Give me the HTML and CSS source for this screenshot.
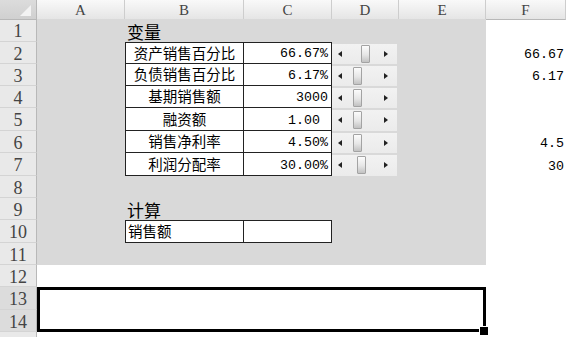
FILE: index.html
```html
<!DOCTYPE html>
<html lang="zh">
<head>
  <meta charset="UTF-8" />
  <title>变量</title>
  <link rel="stylesheet" href="styles.css">
</head>
<body>
  <div class="sheet">
    <!-- 列标题 -->
    <div class="row head">
      <div class="corner"><span class="tri"></span></div>
      <div class="ch">A</div>
      <div class="ch">B</div>
      <div class="ch">C</div>
      <div class="ch">D</div>
      <div class="ch">E</div>
      <div class="ch">F</div>
    </div>

    <div class="row tall">
      <div class="rh">1</div>
      <div class="c g"></div>
      <div class="c g title">变量</div>
      <div class="c g"></div>
      <div class="c g"></div>
      <div class="c g"></div>
      <div class="c"></div>
    </div>

    <div class="row">
      <div class="rh">2</div>
      <div class="c g"></div>
      <div class="c tb top">资产销售百分比</div>
      <div class="c tc top">66.67%</div>
      <div class="c g"><div class="spin"><i class="al"></i><i class="thumb" style="margin-left:19px"></i><i class="ar"></i></div></div>
      <div class="c g"></div>
      <div class="c num">66.67</div>
    </div>

    <div class="row">
      <div class="rh">3</div>
      <div class="c g"></div>
      <div class="c tb">负债销售百分比</div>
      <div class="c tc">6.17%</div>
      <div class="c g"><div class="spin"><i class="al"></i><i class="thumb" style="margin-left:11px"></i><i class="ar"></i></div></div>
      <div class="c g"></div>
      <div class="c num">6.17</div>
    </div>

    <div class="row">
      <div class="rh">4</div>
      <div class="c g"></div>
      <div class="c tb">基期销售额</div>
      <div class="c tc">3000</div>
      <div class="c g"><div class="spin"><i class="al"></i><i class="thumb" style="margin-left:11px"></i><i class="ar"></i></div></div>
      <div class="c g"></div>
      <div class="c"></div>
    </div>

    <div class="row tall">
      <div class="rh">5</div>
      <div class="c g"></div>
      <div class="c tb">融资额</div>
      <div class="c tc">1.00&nbsp;</div>
      <div class="c g"><div class="spin"><i class="al"></i><i class="thumb" style="margin-left:11px"></i><i class="ar"></i></div></div>
      <div class="c g"></div>
      <div class="c"></div>
    </div>

    <div class="row">
      <div class="rh">6</div>
      <div class="c g"></div>
      <div class="c tb">销售净利率</div>
      <div class="c tc">4.50%</div>
      <div class="c g"><div class="spin"><i class="al"></i><i class="thumb" style="margin-left:11px"></i><i class="ar"></i></div></div>
      <div class="c g"></div>
      <div class="c num">4.5</div>
    </div>

    <div class="row tall">
      <div class="rh">7</div>
      <div class="c g"></div>
      <div class="c tb">利润分配率</div>
      <div class="c tc">30.00%</div>
      <div class="c g"><div class="spin"><i class="al"></i><i class="thumb" style="margin-left:15px"></i><i class="ar"></i></div></div>
      <div class="c g"></div>
      <div class="c num">30</div>
    </div>

    <div class="row">
      <div class="rh">8</div>
      <div class="c g"></div>
      <div class="c g"></div>
      <div class="c g"></div>
      <div class="c g"></div>
      <div class="c g"></div>
      <div class="c"></div>
    </div>

    <div class="row">
      <div class="rh">9</div>
      <div class="c g"></div>
      <div class="c g title">计算</div>
      <div class="c g"></div>
      <div class="c g"></div>
      <div class="c g"></div>
      <div class="c"></div>
    </div>

    <div class="row tall">
      <div class="rh">10</div>
      <div class="c g"></div>
      <div class="c tb top left">销售额</div>
      <div class="c tc top"></div>
      <div class="c g"></div>
      <div class="c g"></div>
      <div class="c"></div>
    </div>

    <div class="row">
      <div class="rh">11</div>
      <div class="c g"></div>
      <div class="c g"></div>
      <div class="c g"></div>
      <div class="c g"></div>
      <div class="c g"></div>
      <div class="c"></div>
    </div>

    <div class="row">
      <div class="rh">12</div>
      <div class="c"></div>
      <div class="c"></div>
      <div class="c"></div>
      <div class="c"></div>
      <div class="c"></div>
      <div class="c"></div>
    </div>

    <!-- 合并单元格 A13:E14（选中） -->
    <div class="row pair">
      <div class="rh sel">13</div>
      <div class="merge"></div>
      <div class="rh sel">14</div>
      <div class="c"></div>
      <div class="c"></div>
    </div>

    <div class="row">
      <div class="rh"></div>
      <div class="c"></div>
    </div>
  </div>
</body>
</html>
```

FILE: styles.css
```css
* { margin: 0; padding: 0; box-sizing: border-box; }

body {
  background: #fff;
  overflow: hidden;
  font-family: "Noto Sans CJK SC", sans-serif;
  color: #000;
}

.sheet {
  width: 566px;
  height: 337px;
  overflow: hidden;
}

.row {
  display: grid;
  grid-template-columns: 37px 88px 119px 88px 67px 87px 80px;
  height: 22px;
}
.row.tall { height: 23px; }
.row.head { height: 19px; }

/* 左上角 */
.corner {
  position: relative;
  background: linear-gradient(#dcdcdc, #d0d0d0);
  border-right: 1px solid #b8b8b8;
  border-bottom: 1px solid #b8b8b8;
}
.tri {
  position: absolute;
  right: 5px;
  bottom: 3px;
  width: 0;
  height: 0;
  border-left: 11px solid transparent;
  border-bottom: 11px solid #f3f3f3;
}

.ch {
  display: flex;
  align-items: center;
  justify-content: center;
  padding-top: 2px;
  background: linear-gradient(#f9f9f9, #e5e5e5);
  border-right: 1px solid #cdcdcd;
  border-bottom: 1px solid #b8b8b8;
  font: 15px "Liberation Serif", serif;
  color: #444;
}

.rh {
  display: flex;
  align-items: center;
  justify-content: center;
  padding-top: 2px;
  background: #e9e9e9;
  border-right: 1px solid #b8b8b8;
  border-bottom: 1px solid #d4d4d4;
  font: 18px "Liberation Serif", serif;
  line-height: 1;
  color: #444;
}
.rh.sel { background: #dcdcdc; }

.c {
  display: flex;
  align-items: center;
  line-height: 1;
  white-space: nowrap;
}
.g { background: #d9d9d9; }

.title {
  align-items: flex-end;
  padding: 0 0 2px 2px;
  font-size: 17px;
}

/* 变量表格 */
.tb {
  justify-content: center;
  background: #fff;
  border-left: 1px solid #222;
  border-right: 1px solid #222;
  border-bottom: 1px solid #222;
  font-size: 14.5px;
}
.tb.left {
  justify-content: flex-start;
  padding-left: 2px;
}
.tc {
  justify-content: flex-end;
  align-items: flex-end;
  padding: 0 3px 2px 0;
  background: #fff;
  border-right: 1px solid #222;
  border-bottom: 1px solid #222;
  font: 13.3px "Liberation Mono", monospace;
}
.top { border-top: 1px solid #222; }

.num {
  justify-content: flex-end;
  align-items: flex-end;
  padding: 0 2px 2px 0;
  font: 13.3px "Liberation Mono", monospace;
}

/* 滚动条控件 */
.spin {
  display: flex;
  align-items: center;
  width: 65px;
  height: calc(100% - 2px);
  margin-top: 1px;
  background: linear-gradient(#f2f2f2, #ebebeb);
}
.al {
  margin-left: 6px;
  border-top: 3px solid transparent;
  border-bottom: 3px solid transparent;
  border-right: 4px solid #222;
}
.ar {
  margin-left: auto;
  margin-right: 9px;
  border-top: 3px solid transparent;
  border-bottom: 3px solid transparent;
  border-left: 4px solid #222;
}
.thumb {
  width: 9px;
  height: 18px;
  border: 1px solid #a3a3a3;
  border-radius: 1px;
  background: linear-gradient(#fcfcfc 0%, #e6e6e6 55%, #c2c2c2 100%);
}

/* 选中的合并单元格 */
.pair {
  grid-template-rows: 23px 22px;
  height: 45px;
}
.pair .rh { grid-column: 1; }
.merge {
  position: relative;
  grid-column: 2 / 7;
  grid-row: 1 / 3;
  background: #fff;
  border: 3px solid #000;
}
.merge::after {
  content: "";
  position: absolute;
  right: -6px;
  bottom: -7px;
  width: 8px;
  height: 8px;
  background: #000;
  border: 1px solid #fff;
}
```
